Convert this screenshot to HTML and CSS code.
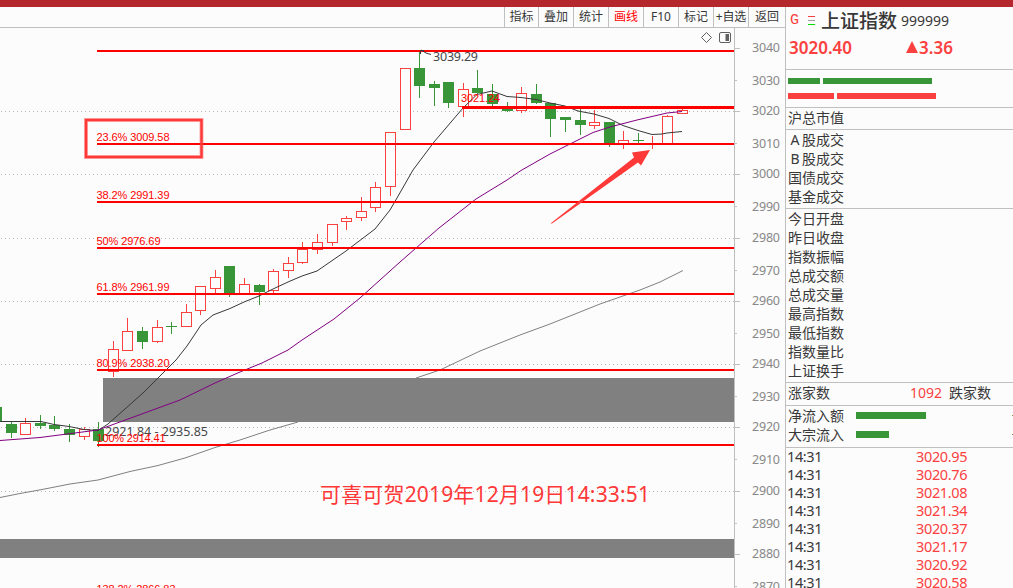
FILE: index.html
```html
<!DOCTYPE html>
<html lang="zh-CN">
<head>
    <meta charset="UTF-8">
    <meta name="viewport" content="width=device-width, initial-scale=1.0">
    <title>上证指数 999999</title>
    <link rel="stylesheet" href="styles.css">
</head>
<body>
    <div class="top-bar"></div>
    <div class="layout">
        <main class="main">
            <nav class="toolbar">
                <span class="tool">指标</span>
                <span class="tool">叠加</span>
                <span class="tool">统计</span>
                <span class="tool active">画线</span>
                <span class="tool">F10</span>
                <span class="tool">标记</span>
                <span class="tool tight">+自选</span>
                <span class="tool last">返回</span>
            </nav>

            <svg class="chart" width="785" height="560" viewBox="0 28 785 560">
                <!-- dotted grid -->
                <g class="grid">
                    <path d="M1 111.5H734M1 174.5H734M1 238.5H734M1 301.5H734M1 364.5H734M1 427.5H734M1 491.5H734"/>
                </g>

                <!-- gaps -->
                <rect class="band" x="103" y="378" width="631" height="44"/>
                <rect class="band" x="0" y="539" width="734" height="19"/>
                <g id="candles"></g>
                <text class="note" x="105" y="436" textLength="103">2921.84 - 2935.85</text>

                <!-- moving averages -->
                <polyline class="ma ma-short" points="0,421.5 41,421.5 54,424.5 69,426.5 84,429.5 98,430.5 108,424 143,393 176,360 187,346 201,325 213,315 230,308.5 244,302 259,296 273,289 288,282 302,276 317,271 346,251 375,229 390,210 397,198 413,170 419,162 434,142 463,108 477,94.5 492,91 507,96.5 521,97.5 536,99.5 550,103 565,106 578,111 594,114 609,118.5 623,125.5 638,130.5 652,134.5 662,134 667,133 682,131.5"/>
                <polyline class="ma ma-mid" points="0,440.5 40,437.5 98,430 139,415 180,400 215,383 240,372 262,363 288,350 302,340 334,319 360,298 400,262 439,228 476,199 507,180 521,170.5 550,154 572,143 593,132.5 610,127 637,120 667,113 682,111.5"/>
                <polyline class="ma ma-long" points="0,497.5 20,493.5 42,489.5 70,484 98,480 130,471.5 158,465.5 185,458 215,447.5 240,440 270,430 298,422"/>
                <polyline class="ma ma-long" points="416,378 440,370 480,351 520,335 550,324 580,312 600,304 640,290 660,282 683,270.5"/>

                <!-- fibonacci levels -->
                <g class="fib">
                    <rect x="97" y="50" width="637" height="2"/>
                    <rect x="97" y="143" width="637" height="2"/>
                    <rect x="97" y="201" width="637" height="2"/>
                    <rect x="97" y="247" width="637" height="2"/>
                    <rect x="97" y="293" width="637" height="2"/>
                    <rect x="97" y="369" width="637" height="2"/>
                    <rect x="97" y="444" width="637" height="2"/>
                    <rect x="462" y="106" width="272" height="3"/>
                    <text x="96.5" y="141" textLength="73">23.6% 3009.58</text>
                    <text x="96.5" y="199" textLength="73">38.2% 2991.39</text>
                    <text x="96.5" y="245" textLength="64">50% 2976.69</text>
                    <text x="96.5" y="291" textLength="73">61.8% 2961.99</text>
                    <text x="96.5" y="367" textLength="73">80.9% 2938.20</text>
                    <text x="96.5" y="442" textLength="69">100% 2914.41</text>
                    <text x="96.5" y="593" textLength="79">138.2% 2866.83</text>
                    <text x="461" y="102" textLength="39">3021.24</text>
                </g>

                <path class="pointer" d="M420.5 54V50.5H424M421 50L426 53L431 54.5"/>
                <text class="note" x="433" y="61" textLength="45">3039.29</text>

                <!-- hand-drawn marks -->
                <rect class="mark-glow" x="86" y="120" width="115.5" height="37"/>
                <rect class="mark-box" x="86" y="120" width="115.5" height="37"/>
                <path class="mark-arrow" d="M550.5 223.5L634 157.5L632 152.5L650 150L641 165.5L638 162.5L552 223.5Z"/>
                <text class="mark-text" x="320" y="502" textLength="330">可喜可贺2019年12月19日14:33:51</text>

                <!-- chart tools -->
                <path class="icon-diamond" d="M701.5 37.5L706.5 32.5L711.5 37.5L706.5 42.5Z"/>
                <rect class="icon-panel" x="719.5" y="32.5" width="11" height="10" rx="1.5"/>
                <rect class="icon-fill" x="725.5" y="34" width="3.5" height="7"/>

                <line class="axis" x1="734.5" y1="28" x2="734.5" y2="588"/>
                <g id="axis"></g>
            </svg>
        </main>

        <aside class="panel">
            <section class="head">
                <div class="title">
                    <span class="flag">G</span>
                    <svg class="menu" width="8" height="9" viewBox="0 0 8 9">
                        <rect width="7" height="1" y="0" fill="#fb4040"/>
                        <rect width="7" height="1" y="4" fill="#a0a0a0"/>
                        <rect width="7" height="1" y="8" fill="#00e000"/>
                    </svg>
                    <span class="name">上证指数</span>
                    <span class="code">999999</span>
                </div>
                <div class="price">
                    <span class="last-price">3020.40</span>
                    <svg class="up" width="12" height="12" viewBox="0 0 12 12"><path d="M6 0L12 12H0Z"/></svg>
                    <span>3.36</span>
                </div>
            </section>
            <section class="strength">
                <div class="bars"><i class="bar green w32"></i><i class="bar green w109"></i></div>
                <div class="bars"><i class="bar red w46"></i><i class="bar red w99"></i></div>
            </section>
            <section class="cap">
                <div class="row">沪总市值</div>
            </section>
            <section class="turnover">
                <div class="row"><span class="wide">A</span>股成交</div>
                <div class="row"><span class="wide">B</span>股成交</div>
                <div class="row">国债成交</div>
                <div class="row">基金成交</div>
            </section>
            <section class="quotes">
                <div class="row">今日开盘</div>
                <div class="row">昨日收盘</div>
                <div class="row">指数振幅</div>
                <div class="row">总成交额</div>
                <div class="row">总成交量</div>
                <div class="row">最高指数</div>
                <div class="row">最低指数</div>
                <div class="row">指数量比</div>
                <div class="row">上证换手</div>
            </section>
            <section class="breadth">
                <div class="row"><span>涨家数</span><span class="count">1092</span><span>跌家数</span></div>
            </section>
            <section class="flow">
                <div class="row"><span>净流入额</span><i class="bar green w70"></i><i class="minus"></i></div>
                <div class="row"><span>大宗流入</span><i class="bar green w33"></i><i class="minus"></i></div>
            </section>
            <section class="ticks">
                <div class="tick"><span>14:31</span><span class="deal">3020.95</span></div>
                <div class="tick"><span>14:31</span><span class="deal">3020.76</span></div>
                <div class="tick"><span>14:31</span><span class="deal">3021.08</span></div>
                <div class="tick"><span>14:31</span><span class="deal">3021.34</span></div>
                <div class="tick"><span>14:31</span><span class="deal">3020.37</span></div>
                <div class="tick"><span>14:31</span><span class="deal">3021.17</span></div>
                <div class="tick"><span>14:31</span><span class="deal">3020.92</span></div>
                <div class="tick"><span>14:31</span><span class="deal">3020.58</span></div>
            </section>
        </aside>
    </div>
    <script src="script.js"></script>
</body>
</html>
```

FILE: styles.css
```css
:root {
    --red: #fb4040;
    --green: #389638;
    --line: #c0c0c0;
    --text: #383838;
    --bg: #fcfcfc;
}
* {
    box-sizing: border-box;
}
body {
    margin: 0;
    height: 588px;
    overflow: hidden;
    background-color: var(--bg);
    color: var(--text);
    font-family: "Noto Sans", "Noto Sans CJK SC", sans-serif;
    font-size: 14px;
}
.top-bar {
    height: 7px;
    background-color: #b4282d;
}
.layout {
    display: flex;
    height: 581px;
}
.main {
    width: 785px;
    flex: none;
}
.toolbar {
    display: flex;
    justify-content: flex-end;
    height: 21px;
    border-bottom: 1px solid var(--line);
}
.tool {
    width: 35px;
    border-left: 1px solid var(--line);
    font-size: 12px;
    line-height: 19px;
    text-align: center;
    white-space: nowrap;
}
.tool:first-child {
    width: 34px;
}
.tool.last {
    width: 37px;
}
.tool.tight {
    letter-spacing: -0.2px;
}
.tool.active {
    color: #ff0000;
}

/* chart */
.chart {
    display: block;
}
.grid path {
    stroke: #b8b8b8;
    stroke-width: 1;
    stroke-dasharray: 1 3;
}
.band {
    fill: #808080;
}
.note {
    font-size: 12.5px;
    fill: #484848;
}
.ma {
    fill: none;
    stroke-width: 1;
}
.ma-short {
    stroke: #383838;
}
.ma-mid {
    stroke: #800080;
}
.ma-long {
    stroke: #808080;
}
.fib {
    fill: #ff0000;
    font-family: "Liberation Sans", sans-serif;
    font-size: 11px;
}
.up-candle {
    fill: var(--bg);
    stroke: var(--red);
}
.down-candle {
    fill: var(--green);
}
.up-wick {
    fill: var(--red);
}
.pointer {
    fill: none;
    stroke: #383838;
}
.mark-glow {
    fill: none;
    stroke: #ff3838;
    stroke-opacity: 0.4;
    stroke-width: 4;
}
.mark-box {
    fill: none;
    stroke: #ff3838;
    stroke-width: 2.4;
}
.mark-arrow {
    fill: #ff3838;
}
.mark-text {
    fill: #ff3838;
    font-size: 21px;
}
.icon-diamond,
.icon-panel {
    fill: none;
    stroke: #606060;
}
.icon-fill {
    fill: #606060;
}
.axis {
    stroke: var(--line);
}
.axis-tick {
    fill: var(--line);
}
.axis-label {
    font-size: 12.5px;
    fill: #888888;
}

/* quote panel */
.panel {
    flex: 1;
    border-left: 1px solid var(--line);
    overflow: hidden;
}
.panel section {
    padding-left: 2px;
    border-bottom: 1px solid var(--line);
}
.head {
    height: 63px;
}
.title {
    display: flex;
    align-items: center;
    height: 27px;
}
.flag {
    width: 16px;
    padding-left: 2px;
    font-family: "Liberation Mono", monospace;
    font-size: 15px;
    color: var(--red);
}
.menu {
    margin-left: 4px;
}
.name {
    margin-left: 5px;
    font-size: 19px;
    font-weight: 500;
    font-family: "Noto Sans CJK SC", sans-serif;
    line-height: 25px;
    height: 27px;
}
.code {
    margin-left: 4px;
}
.price {
    display: flex;
    align-items: center;
    height: 26px;
    padding-left: 1px;
    font-size: 17px;
    font-weight: 600;
    color: var(--red);
}
.last-price {
    width: 117px;
}
.up {
    margin-right: 1px;
    fill: var(--red);
}
.strength {
    display: flex;
    flex-direction: column;
    gap: 9px;
    height: 38px;
    padding-top: 8px;
}
.bars {
    display: flex;
    gap: 3px;
}
.bar {
    height: 6px;
}
.green {
    background-color: var(--green);
}
.red {
    background-color: var(--red);
}
.w32 { width: 32px; }
.w33 { width: 33px; }
.w46 { width: 46px; }
.w70 { width: 70px; }
.w99 { width: 99px; }
.w109 { width: 109px; }
.row {
    display: flex;
    height: 19px;
    line-height: 19px;
    white-space: nowrap;
}
.cap {
    height: 22px;
}
.turnover {
    height: 79px;
}
.wide {
    width: 14px;
    text-align: center;
}
.quotes {
    height: 174px;
}
.breadth {
    height: 23px;
}
.count {
    width: 112px;
    margin-right: 7px;
    text-align: right;
    color: var(--red);
}
.flow {
    height: 42px;
}
.flow .row {
    align-items: center;
}
.flow .bar {
    height: 7px;
    margin-left: 12px;
}
.minus {
    width: 1px;
    height: 1px;
    margin-left: auto;
    background-color: #809030;
}
.panel .ticks {
    padding-left: 1px;
    border-bottom: none;
}
.tick {
    display: flex;
    height: 18px;
    font-size: 14.5px;
    line-height: 17px;
}
.tick span:first-child {
    width: 129px;
    letter-spacing: -0.4px;
}
.deal {
    color: var(--red);
    letter-spacing: -0.35px;
}
```

FILE: script.js
```js
const NS = 'http://www.w3.org/2000/svg';

// left, body top, body bottom, wick top, wick bottom, rising
const candles = [
    [-9, 407, 422, 407, 422, 0],
    [6, 424, 433, 422, 438, 0],
    [20, 423, 435, 418, 435, 1],
    [35, 423, 426, 415, 429, 0],
    [49, 425, 429, 416, 431, 0],
    [64, 429, 435, 424, 442, 0],
    [79, 429, 437, 427, 440, 1],
    [93, 429, 441, 422, 447, 0],
    [108, 349, 372, 341, 377, 1],
    [122, 331, 351, 318, 351, 1],
    [137, 331, 342, 327, 349, 0],
    [152, 327, 342, 320, 343, 1],
    [166, 326, 327, 322, 334, 0],
    [181, 312, 327, 304, 327, 1],
    [195, 286, 311, 286, 315, 1],
    [210, 277, 289, 270, 295, 1],
    [224, 266, 293, 266, 297, 0],
    [239, 284, 294, 278, 294, 1],
    [254, 285, 292, 284, 305, 0],
    [268, 271, 291, 269, 293, 1],
    [283, 263, 271, 257, 278, 1],
    [297, 249, 263, 242, 264, 1],
    [312, 242, 250, 234, 254, 1],
    [327, 224, 243, 224, 246, 1],
    [341, 218, 222, 216, 230, 1],
    [356, 211, 218, 197, 221, 1],
    [370, 187, 208, 182, 212, 1],
    [385, 132, 187, 132, 196, 1],
    [400, 68, 130, 68, 130, 1],
    [414, 68, 86, 52, 98, 0],
    [429, 84, 88, 81, 106, 0],
    [443, 82, 103, 82, 108, 0],
    [458, 89, 107, 83, 117, 1],
    [472, 88, 93, 70, 95, 0],
    [487, 94, 104, 84, 106, 0],
    [502, 109, 111, 102, 112, 0],
    [516, 93, 111, 87, 113, 1],
    [531, 94, 103, 84, 104, 0],
    [545, 103, 119, 103, 137, 0],
    [560, 117, 120, 117, 132, 0],
    [575, 120, 125, 109, 135, 0],
    [589, 122, 126, 110, 129, 1],
    [604, 122, 143, 122, 147, 0],
    [618, 140, 144, 131, 149, 1],
    [633, 140, 141, 133, 144, 0],
    [647, 143, 145, 136, 149, 1],
    [662, 116, 144, 115, 144, 1],
    [677, 110, 114, 108, 114, 1]
];

// tick positions for 3040, 3030, ... 2870
const ticks = [48, 80, 111, 143, 174, 206, 238, 270, 301, 333, 364, 396, 427, 459, 491, 523, 554, 586];

function addRect(parent, x, y, width, height, className) {
    const rect = document.createElementNS(NS, 'rect');
    rect.setAttribute('x', x);
    rect.setAttribute('y', y);
    rect.setAttribute('width', width);
    rect.setAttribute('height', height);
    rect.setAttribute('class', className);
    parent.appendChild(rect);
}

const candleGroup = document.getElementById('candles');
candles.forEach(([x, top, bottom, high, low, rising]) => {
    addRect(candleGroup, x + 5, high, 1, low - high, rising ? 'up-wick' : 'down-candle');
    if (rising) {
        // half pixel inset keeps the 1px outline sharp
        addRect(candleGroup, x + 0.5, top + 0.5, 10, bottom - top - 1, 'up-candle');
    } else {
        addRect(candleGroup, x, top, 11, bottom - top, 'down-candle');
    }
});

const axisGroup = document.getElementById('axis');
ticks.forEach((y, i) => {
    const major = i % 2 === 0;
    addRect(axisGroup, 735, y, major ? 5 : 2, 1, 'axis-tick');
    const label = document.createElementNS(NS, 'text');
    label.setAttribute('x', 752);
    label.setAttribute('y', major ? y + 4 : y + 5);
    label.setAttribute('textLength', 28);
    label.setAttribute('class', 'axis-label');
    label.textContent = 3040 - i * 10;
    axisGroup.appendChild(label);
});
```
